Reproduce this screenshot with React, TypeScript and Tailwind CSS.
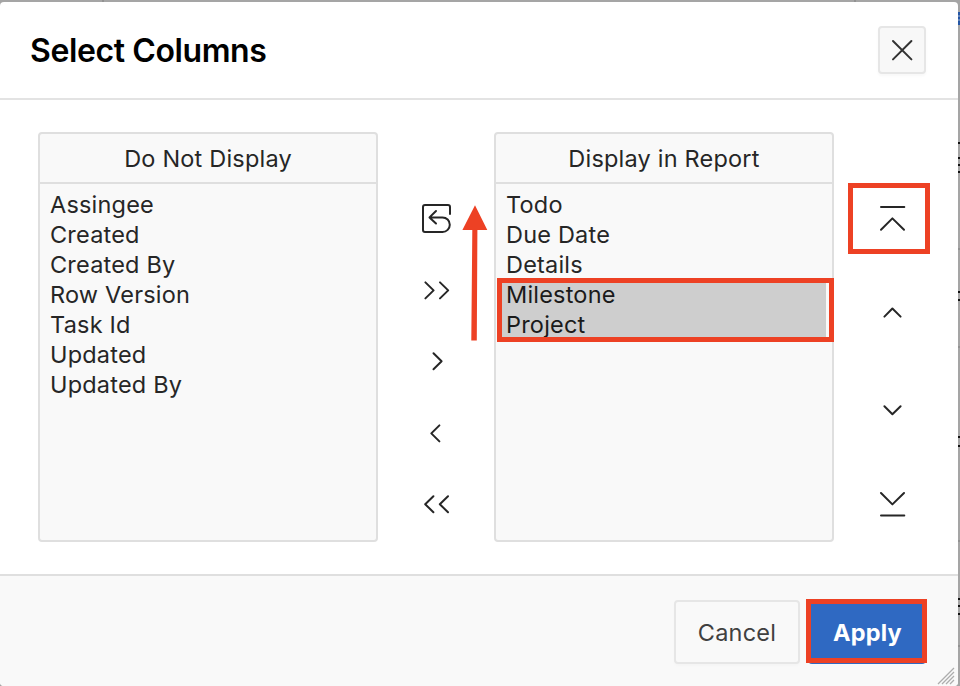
import React from "react";

const hidden = ["Assingee", "Created", "Created By", "Row Version", "Task Id", "Updated", "Updated By"];
const shown = ["Todo", "Due Date", "Details", "Milestone", "Project"];
const selected = ["Milestone", "Project"];

function Glyph({ d, label }: { d: string; label: string }) {
  return (
    <button type="button" aria-label={label} className="block h-8 w-8 shrink-0">
      <svg viewBox="0 0 32 32" className="h-8 w-8" fill="none" stroke="#262626" strokeWidth="2" strokeLinecap="round" strokeLinejoin="round">
        <path d={d} />
      </svg>
    </button>
  );
}

function ListPanel({ title, items }: { title: string; items: string[] }) {
  return (
    <section className="flex h-[410px] w-[340px] shrink-0 flex-col rounded border-2 border-[#dfdfdf] bg-[#f9f9f9]">
      <h2 className="h-[50px] border-b-2 border-[#dfdfdf] pt-px text-center leading-[48px]">{title}</h2>
      <ul className="pt-[6px] pr-[6px] pl-1">
        {items.map((item) => (
          <li
            key={item}
            className={
              selected.includes(item)
                ? "h-[30px] bg-[#cecece] pl-[6px] leading-[30px] text-[#1a1a1a]"
                : "h-[30px] pl-[6px] leading-[30px]"
            }
          >
            {item}
          </li>
        ))}
      </ul>
    </section>
  );
}

function Backdrop() {
  const marks = [142, 157, 164, 171, 291, 299, 436, 445, 598, 605, 613];
  return (
    <svg className="absolute inset-0" width="960" height="686" aria-hidden="true">
      <rect width="960" height="686" fill="#a5a5a5" />
      <path d="M103 0v2M855 0v2" stroke="#929292" strokeWidth="2" />
      <rect x="958" y="12" width="2" height="13" fill="#2456a5" />
      <path d="M958 16h2M958 20h2" stroke="#a5b4cc" />
      <path d="M958 249h2M958 347h2M958 541h2M958 646h2" stroke="#929292" strokeWidth="2" />
      {marks.map((y) => (
        <rect key={y} x="958" y={y} width="2" height="2" fill="#111" />
      ))}
    </svg>
  );
}

export default function App() {
  return (
    <main className="relative h-[686px] w-[960px] overflow-hidden pt-[2px] font-['Inter','Liberation_Sans',sans-serif] text-[23.5px] tracking-[0.2px] text-[#262626]">
      <Backdrop />
      <div className="relative flex h-[684px] w-[958px] flex-col overflow-hidden rounded bg-white">
        <header className="flex h-[98px] shrink-0 items-center justify-between border-b-2 border-[#e3e3e3] pr-8 pl-[30px]">
          <h1 className="pt-[2px] text-[32px] font-semibold tracking-[-0.4px] text-black">Select Columns</h1>
          <button type="button" aria-label="Close" className="flex h-12 w-12 items-center justify-center rounded border-2 border-[#e6e6e6] bg-[#f8f8f8] shadow-[0_2px_3px_rgba(0,0,0,0.03)]">
            <svg width="24" height="24" viewBox="0 0 24 24" fill="none" stroke="#333" strokeWidth="2" strokeLinecap="round">
              <path d="M3 3l18.4 18.4M21.4 3L3 21.4" />
            </svg>
          </button>
        </header>

        <div className="flex h-[474px] shrink-0 pt-8 pl-[38px]">
          <ListPanel title="Do Not Display" items={hidden} />
          <div className="flex h-[388px] w-[116px] flex-col items-center justify-between pt-[70px]">
            <Glyph label="Reset" d="M30 12V5a2 2 0 0 0-2-2H5a2 2 0 0 0-2 2v23a2 2 0 0 0 2 2h17.5a7.3 7.3 0 0 0 0-14.6H9.5M16 9L9.5 15.4L16 21.5" />
            <Glyph label="Move all" d="M5.4 8.4l8.2 8-8.2 8M20 8.4l8.2 8-8.2 8" />
            <Glyph label="Move" d="M13.5 8.2l8.1 8-8.1 8" />
            <Glyph label="Remove" d="M19.4 8.4l-8.1 8 8.1 8" />
            <Glyph label="Remove all" d="M13.4 8.2l-8.2 8 8.2 8M28 8.2l-8.2 8 8.2 8" />
          </div>
          <ListPanel title="Display in Report" items={shown} />
          <div className="flex h-[388px] w-[116px] flex-col items-center justify-between pt-[71px]">
            <Glyph label="Top" d="M5 4h23.3M5 26.8l11.4-11.4 11.6 11.4" />
            <Glyph label="Up" d="M8.4 18.6l8-8.1 8.2 8.1" />
            <Glyph label="Down" d="M8.4 13.2l8 8 8.2-8" />
            <Glyph label="Bottom" d="M5 5l11.4 11.4L28 5M5 27.4h23.3" />
          </div>
        </div>

        <footer className="relative flex h-28 shrink-0 justify-end gap-2 border-t-2 border-[#dfdfdf] bg-[#f9f9f9] pt-6 pr-8">
          <button type="button" className="h-16 w-[126px] rounded border-2 border-[#e6e6e6] bg-[#f9f9f9] pt-[2px] text-[#404040] shadow-[0_2px_3px_rgba(0,0,0,0.02)]">
            Cancel
          </button>
          <button type="button" className="h-16 w-[118px] rounded bg-[#2f69c2] pt-[2px] pl-[1px] font-bold text-white">
            Apply
          </button>
          <svg className="absolute right-[3px] bottom-[1px]" width="18" height="18" viewBox="0 0 18 18" stroke="#adadad" strokeWidth="1.3">
            <path d="M1 17L17 1M5 17L17 5M9 17L17 9M13 17L17 13" />
          </svg>
        </footer>
      </div>

      <div className="absolute top-[183px] left-[848px] h-[71px] w-[82px] border-[5px] border-[#ed4124]" />
      <div className="absolute top-[278px] left-[497px] h-[64px] w-[337px] border-[5px] border-[#ed4124]" />
      <div className="absolute top-[599px] left-[806px] h-[64px] w-[121px] border-[5px] border-[#ed4124]" />
      <svg className="absolute top-[204px] left-[460px]" width="30" height="140" fill="#ed4124" aria-hidden="true">
        <path d="M15 1.3L27.3 26H17.4L16.8 136.6H11.3L12.3 26H2.4Z" />
      </svg>
    </main>
  );
}
